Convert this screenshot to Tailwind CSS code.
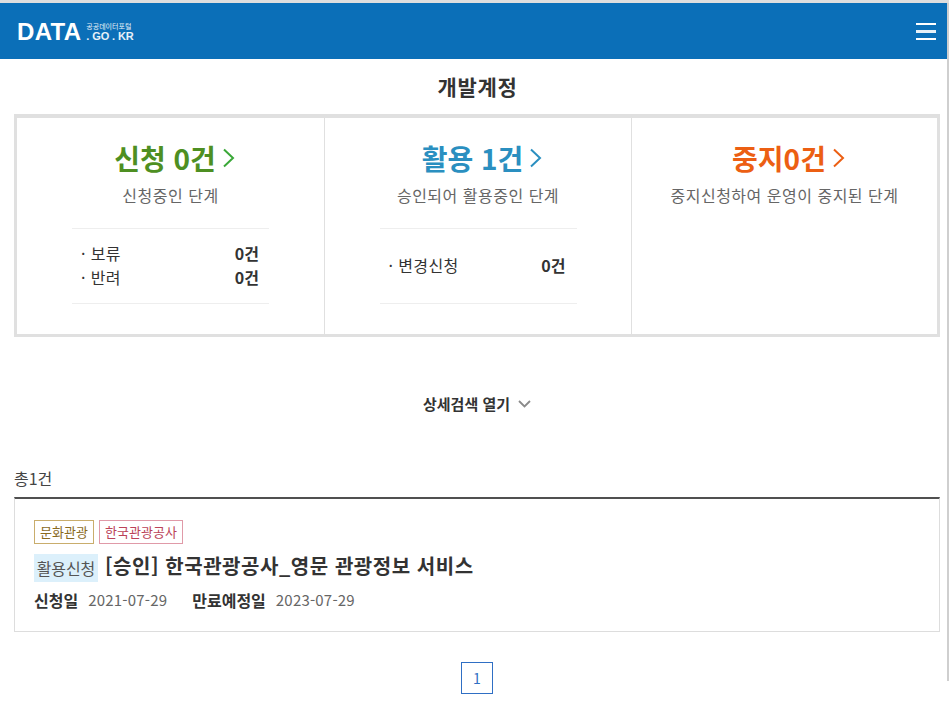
<!DOCTYPE html>
<html lang="ko">
<head>
    <meta charset="UTF-8">
    <title>개발계정 - 공공데이터포털</title>
    <script src="https://cdn.jsdelivr.net/npm/@tailwindcss/browser@4"></script>
</head>
<body class="bg-white text-[#333] font-['Noto_Sans_CJK_KR',sans-serif] relative h-[709px] overflow-hidden">
    <!-- scrollbar sliver on the right edge -->
    <div class="absolute right-0 top-[3px] h-[678px] w-[2px] bg-[#cfcfcf]"></div>

    <!-- Header -->
    <header class="h-[59px] border-t-[3px] border-[#dedede] bg-[#0b6fb8] flex items-center justify-between pl-[17px] pr-[13px]">
        <a href="#" class="flex items-center text-white font-['Liberation_Sans',sans-serif] pt-[2px]">
            <span class="text-[24px] font-bold leading-none tracking-[0.3px]">DATA</span>
            <span class="ml-[5px] flex flex-col">
                <span class="text-[7px] leading-[9px] font-['Noto_Sans_CJK_KR',sans-serif] opacity-90">공공데이터포털</span>
                <span class="text-[11px] leading-[11px] font-bold tracking-[-0.1px] text-white/90">. GO . KR</span>
            </span>
        </a>
        <button class="flex flex-col gap-[5px] w-[20px] pt-[1px]">
            <span class="h-[2px] bg-white"></span>
            <span class="h-[3px] bg-white/90"></span>
            <span class="h-[2px] bg-white"></span>
        </button>
    </header>

    <h1 class="pl-[6px] text-center text-[21px] font-bold leading-[28px] tracking-[0.7px] mt-[13px] text-[#333]">개발계정</h1>

    <!-- Summary box -->
    <section class="mx-[14px] mt-[14px] w-[926px] h-[223px] border-[3px] border-t-4 border-[#e0e0e0] grid grid-cols-[308px_307px_1fr]">
        <div class="border-r border-[#e0e0e0] flex flex-col items-center pt-[21px]">
            <a href="#" class="ml-[8px] flex items-center gap-[6px] text-[28px] font-bold leading-[38px] text-[#4e8f22]">신청 0건
                <svg width="13" height="20" viewBox="0 0 13 20" fill="none" stroke="#3aa838" stroke-width="2"><path d="M2 1.5 11 10 2 18.5"/></svg>
            </a>
            <p class="mt-[7px] text-[16px] tracking-[0.5px] leading-[22px] text-[#666]">신청중인 단계</p>
            <div class="mt-[22px] w-[197px] h-[76px] border-y border-[#eee] flex flex-col justify-center pl-[9px] pr-[10px] pb-[3px] text-[16px] leading-[24px] text-[#333]">
                <div class="flex justify-between"><span class="tracking-[0.4px]">· 보류</span><b class="font-bold">0건</b></div>
                <div class="flex justify-between"><span class="tracking-[0.4px]">· 반려</span><b class="font-bold">0건</b></div>
            </div>
        </div>
        <div class="border-r border-[#e0e0e0] flex flex-col items-center pt-[21px]">
            <a href="#" class="ml-[8px] flex items-center gap-[6px] text-[28px] font-bold leading-[38px] text-[#2a8fc0]">활용 1건
                <svg width="13" height="20" viewBox="0 0 13 20" fill="none" stroke="#2a8fc0" stroke-width="2"><path d="M2 1.5 11 10 2 18.5"/></svg>
            </a>
            <p class="mt-[7px] text-[16px] tracking-[0.5px] leading-[22px] text-[#666]">승인되어 활용중인 단계</p>
            <div class="mt-[22px] w-[197px] h-[76px] border-y border-[#eee] flex flex-col justify-center pl-[9px] pr-[11px] pb-[3px] text-[16px] leading-[24px] text-[#333]">
                <div class="flex justify-between"><span class="tracking-[0.4px]">· 변경신청</span><b class="font-bold">0건</b></div>
            </div>
        </div>
        <div class="flex flex-col items-center pt-[21px]">
            <a href="#" class="ml-[8px] flex items-center gap-[6px] text-[28px] font-bold leading-[38px] text-[#ec5f13]">중지0건
                <svg width="13" height="20" viewBox="0 0 13 20" fill="none" stroke="#ec5f13" stroke-width="2"><path d="M2 1.5 11 10 2 18.5"/></svg>
            </a>
            <p class="mt-[7px] text-[16px] tracking-[0.5px] leading-[22px] text-[#666]">중지신청하여 운영이 중지된 단계</p>
        </div>
    </section>

    <!-- Detail search toggle -->
    <button class="mt-[55px] pl-[5px] w-full flex items-center justify-center gap-[8px] text-[15px] font-bold leading-[24px] text-[#333]">
        상세검색 열기
        <svg width="13" height="8" viewBox="0 0 13 8" fill="none" stroke="#8a8a8a" stroke-width="1.8"><path d="M1 1 6.5 6.5 12 1"/></svg>
    </button>

    <!-- Result list -->
    <p class="mx-[14px] mt-[50px] text-[16px] leading-[24px] text-[#444]">총1건</p>
    <div class="mx-[14px] mt-[7px] w-[926px] h-[135px] border-[#ddd] border-x border-b border-t-2 border-t-[#505050] pl-[19px] pt-[21px]">
        <div class="flex gap-[5px] text-[13px] leading-[22px]">
            <span class="border border-[#c9ad6c] w-[60px] text-center h-[24px] text-[#8a6a1e]">문화관광</span>
            <span class="border border-[#e09aa8] w-[84px] text-center h-[24px] text-[#bb4258]">한국관광공사</span>
        </div>
        <div class="mt-[10px] flex items-start">
            <span class="bg-[#dcf0fb] h-[28px] w-[64px] text-center text-[16px] tracking-[-0.1px] leading-[28px] text-[#555]">활용신청</span>
            <a href="#" class="ml-[7px] text-[20px] font-bold leading-[24px] text-[#333] tracking-[0.55px]">[승인] 한국관광공사_영문 관광정보 서비스</a>
        </div>
        <div class="mt-[6px] flex items-center text-[16px] leading-[24px]">
            <b class="font-bold text-[#333]">신청일</b>
            <span class="ml-[10px] text-[15px] tracking-[0.2px] text-[#666]">2021-07-29</span>
            <b class="ml-[25px] font-bold text-[#333]">만료예정일</b>
            <span class="ml-[10px] text-[15px] tracking-[0.2px] text-[#666]">2023-07-29</span>
        </div>
    </div>

    <!-- Pagination -->
    <nav class="mt-[30px] flex justify-center pl-[5px]">
        <a href="#" class="w-[32px] h-[32px] border border-[#2f6fc4] flex items-center justify-center text-[14px] text-[#2f6fc4]">1</a>
    </nav>
</body>
</html>
